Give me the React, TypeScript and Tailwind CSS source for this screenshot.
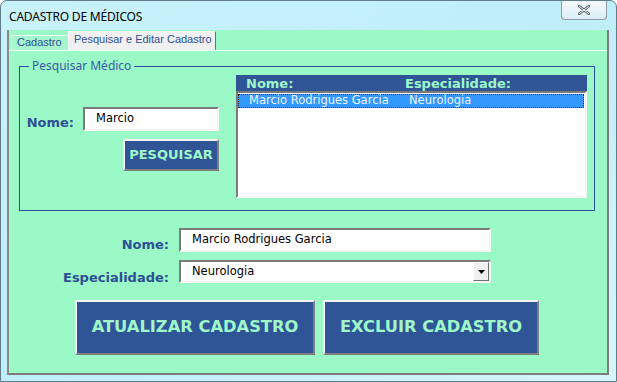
import type { FC } from 'react';

const LABEL = 'font-["DejaVu_Sans",sans-serif] font-bold text-[#2f4f94]';
const SUNKEN = 'bg-white border-2 border-t-[#7a7a7a] border-l-[#7a7a7a] border-b-[#f4f4f4] border-r-[#f4f4f4]';
const RAISED = 'bg-[#2f5597] border-2 border-t-[#f4f4f4] border-l-[#f4f4f4] border-b-[#7f7f7f] border-r-[#7f7f7f] text-[#9ff7c9] font-["DejaVu_Sans",sans-serif] font-bold';

const TitleBar: FC = () => (
  <div className="h-[29px] flex items-start justify-between pl-[8px] pr-[9px]">
    <span className='mt-[7px] text-[12px] text-black font-["Noto_Sans",sans-serif] tracking-[-0.2px]'>
      CADASTRO DE MÉDICOS
    </span>
    <div className="w-[46px] h-[20px] -mt-px rounded-b-[4px] border border-t-0 border-[#8a9aa6] bg-gradient-to-b from-[#f6fbfd] to-[#dbeef5] flex items-center justify-center">
      <svg width="12" height="10" viewBox="0 0 12 10">
        <path d="M1 1 L11 9 M11 1 L1 9" stroke="#5a6670" strokeWidth="2.6" strokeLinecap="round" />
        <path d="M1 1 L11 9 M11 1 L1 9" stroke="#f2f5f7" strokeWidth="1" strokeLinecap="round" />
      </svg>
    </div>
  </div>
);

const Tabs: FC = () => (
  <div className='flex items-end h-[20px] pl-[2px] font-["Liberation_Sans",sans-serif] text-[11px] text-[#2f4f94] whitespace-nowrap'>
    <div className="h-[15px] w-[57px] pl-[5px] border border-b-0 border-[#f4f4f4] border-r-0 leading-[13px] bg-[#a6f6cd]">
      Cadastro
    </div>
    <div className="h-[19px] w-[148px] pl-[5px] bg-[#f0f0f0] border border-b-0 border-[#f8f8f8] border-r-[#6f6f6f] leading-[15px]">
      Pesquisar e Editar Cadastro
    </div>
  </div>
);

const ListBox: FC = () => (
  <div className="w-[351px] h-[123px] flex flex-col">
    <div className='h-[16px] bg-[#2f5597] flex items-center text-[#9ff7c9] font-["DejaVu_Sans",sans-serif] font-bold text-[13px] leading-none'>
      <span className="w-[169px] pl-[10px]">Nome:</span>
      <span>Especialidade:</span>
    </div>
    <div className={`flex-1 ${SUNKEN} border-r-[#dcdcdc] border-b-[#dcdcdc] pt-[1px] pr-[1px]`}>
      <div className='h-[14px] bg-[#3399ff] border border-dotted border-[#3a2a10] flex items-center text-[#eef4ff] font-["DejaVu_Sans",sans-serif] text-[11.5px] leading-none'>
        <span className="w-[170px] pl-[10px]">Marcio Rodrigues Garcia</span>
        <span>Neurologia</span>
      </div>
    </div>
  </div>
);

const App: FC = () => {
  return (
    <div className="w-[617px] h-[382px] bg-gradient-to-br from-[#c9f3fb] via-[#bfeef9] to-[#d7f6fc] border border-[#5f7d8a] rounded-t-[7px] flex flex-col overflow-hidden">
      <TitleBar />
      <div className="flex-1 mb-[6px] ml-[6px] mr-[7px] bg-[#9af9c7] border-l-2 border-r-2 border-b-2 border-[#7d7d7d] border-l-[#8a8a8a] flex flex-col">
        <Tabs />
        <div className="h-[1px] bg-white" />
        <div className="flex-1 flex flex-col pt-[6px]">
          <fieldset className="ml-[10px] mr-[12px] border border-[#2f4f9f] h-[154px] pl-[9px] pr-[7px] pb-[12px] pt-0">
            <legend className='px-[3px] text-[12px] text-[#3a5aa6] font-["Noto_Sans",sans-serif]'>
              Pesquisar Médico
            </legend>
            <div className="flex justify-between items-start">
              <div className="w-[190px] pt-[32px] flex flex-col items-end">
                <div className="flex items-center">
                  <span className={`${LABEL} text-[13px] mr-[9px] translate-y-[4px]`}>Nome:</span>
                  <div className={`w-[136px] h-[24px] ${SUNKEN} flex items-center pl-[11px] text-[11.5px] font-["DejaVu_Sans",sans-serif] text-black`}>
                    Marcio
                  </div>
                </div>
                <button className={`mt-[8px] w-[96px] h-[32px] text-[13px] ${RAISED}`}>PESQUISAR</button>
              </div>
              <ListBox />
            </div>
          </fieldset>
          <div className="mt-[17px] flex flex-col gap-[8px] pl-[170px]">
            <div className="flex items-center">
              <span className={`${LABEL} text-[13px] w-0 flex justify-end`}>
                <span className="pr-[10px] whitespace-nowrap translate-y-[5px]">Nome:</span>
              </span>
              <div className={`w-[312px] h-[24px] ${SUNKEN} flex items-center pl-[11px] text-[11.5px] font-["DejaVu_Sans",sans-serif] text-black`}>
                Marcio Rodrigues Garcia
              </div>
            </div>
            <div className="flex items-center">
              <span className={`${LABEL} text-[13px] w-0 flex justify-end`}>
                <span className="pr-[10px] whitespace-nowrap translate-y-[6px]">Especialidade:</span>
              </span>
              <div className={`w-[312px] h-[23px] ${SUNKEN} flex items-center justify-between pl-[11px] text-[11.5px] font-["DejaVu_Sans",sans-serif] text-black`}>
                <span>Neurologia</span>
                <div className="w-[16px] h-[19px] bg-[#f0f0f0] border border-t-white border-l-white border-b-[#6f6f6f] border-r-[#6f6f6f] flex items-center justify-center">
                  <svg width="7" height="4" viewBox="0 0 7 4"><path d="M0 0 H7 L3.5 4 Z" fill="#000" /></svg>
                </div>
              </div>
            </div>
          </div>
          <div className="mt-[17px] flex gap-[8px] pl-[66px]">
            <button className={`w-[240px] h-[55px] text-[16.3px] ${RAISED}`}>ATUALIZAR CADASTRO</button>
            <button className={`w-[216px] h-[55px] text-[16.3px] ${RAISED}`}>EXCLUIR CADASTRO</button>
          </div>
        </div>
      </div>
    </div>
  );
};

export default App;
